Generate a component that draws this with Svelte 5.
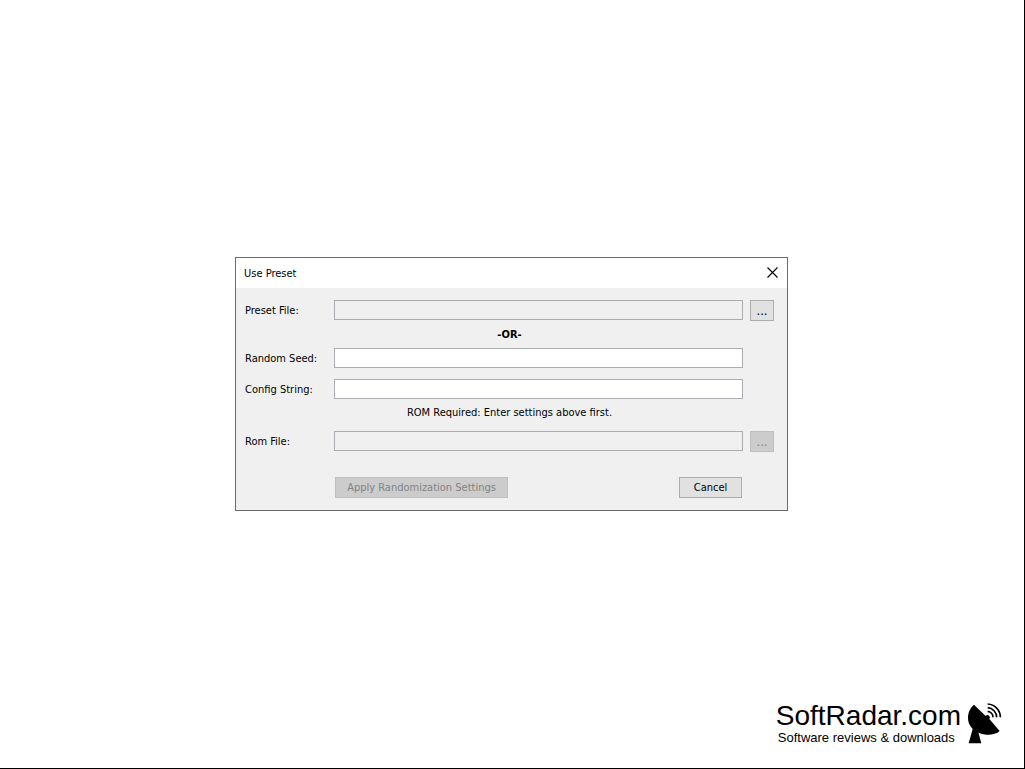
<script>
    let presetFile = $state('');
    let seed = $state('');
    let config = $state('');
    let romFile = $state('');
    let open = $state(true);

    let ready = $derived(romFile !== '');

    function close() {
        open = false;
    }
</script>

<div class="desktop">
    {#if open}
    <div class="dialog" role="dialog" aria-labelledby="title">
        <div class="titlebar">
            <span id="title">Use Preset</span>
            <button class="close" type="button" aria-label="Close" onclick={close}>
                <svg viewBox="0 0 11 11" width="11" height="11">
                    <path d="M.5 .5l10 10M10.5 .5l-10 10" fill="none" stroke="#000" stroke-width="1.1" />
                </svg>
            </button>
        </div>

        <form>
            <div class="row">
                <label for="preset">Preset File:</label>
                <input id="preset" type="text" readonly value={presetFile} />
                <button class="browse" type="button" aria-label="Browse for preset file">...</button>
            </div>
            <p class="or">-OR-</p>
            <div class="row">
                <label for="seed">Random Seed:</label>
                <input id="seed" type="text" bind:value={seed} />
            </div>
            <div class="row config">
                <label for="config">Config String:</label>
                <input id="config" type="text" bind:value={config} />
            </div>
            <p class="hint">ROM Required: Enter settings above first.</p>
            <div class="row">
                <label for="rom">Rom File:</label>
                <input id="rom" type="text" readonly value={romFile} />
                <button class="browse" type="button" aria-label="Browse for ROM file" disabled>...</button>
            </div>
            <div class="actions">
                <button class="apply" type="button" disabled={!ready}>Apply Randomization Settings</button>
                <button class="cancel" type="button" onclick={close}>Cancel</button>
            </div>
        </form>
    </div>
    {/if}

    <footer>
        <div class="brand">
            <div class="name">SoftRadar.com</div>
            <div class="tagline">Software reviews &amp; downloads</div>
        </div>
        <!-- satellite dish -->
        <svg viewBox="24 20 102 123" width="34" height="41" aria-hidden="true">
            <path d="M42 25 L77 59 A6 6 0 0 1 88 68 L119 104 C106 116 80 119 60 111 C38 103 24 86 24 64 C24 48 31 34 42 25Z" />
            <path d="M38 98 L54 104 L64 141 H26Z" />
            <g fill="none" stroke="#000" stroke-width="5">
                <path d="M83 45 A18 18 0 0 1 99 63" />
                <path d="M83 34 A29 29 0 0 1 110 63" />
                <path d="M83 23 A40 40 0 0 1 121 63" />
            </g>
        </svg>
    </footer>
</div>

<style>
    :global(body) {
        background: #fff;
    }
    .desktop {
        box-sizing: border-box;
        min-height: 100vh;
        display: grid;
        grid-template-rows: 1fr auto 1fr;
        justify-items: center;
        padding-right: 1px;
        border-right: 1px solid #000;
        border-bottom: 1px solid #000;
        font-family: Tahoma, "DejaVu Sans Condensed", sans-serif;
        font-size: 11px;
        color: #000;
    }
    .dialog {
        grid-row: 2;
        box-sizing: border-box;
        width: 553px;
        max-width: 100%;
        border: 1px solid #6b6b6b;
        background: #f0f0f0;
    }
    .titlebar {
        display: flex;
        align-items: center;
        justify-content: space-between;
        height: 30px;
        padding: 0 8px;
        background: #fff;
    }
    .close {
        display: flex;
        padding: 1px 1px 3px;
        border: 0;
        background: none;
    }
    form {
        padding: 12px 13px 12px 9px;
    }
    .row {
        display: grid;
        grid-template-columns: 89px 1fr 31px;
        height: 21px;
    }
    label {
        line-height: 22px;
    }
    input {
        box-sizing: border-box;
        width: 100%;
        height: 20px;
        padding: 0 4px;
        border: 1px solid #abadb3;
        background: #fff;
        font: inherit;
        outline: none;
    }
    input:read-only {
        background: #f0f0f0;
    }
    form button {
        box-sizing: border-box;
        height: 21px;
        padding: 0;
        border: 1px solid #adadad;
        background: #e1e1e1;
        color: #000;
        font: inherit;
    }
    form button:disabled {
        border-color: #bfbfbf;
        background: #ccc;
        color: #838383;
    }
    form .browse {
        width: 24px;
        justify-self: end;
        font-size: 13px;
    }
    p {
        margin: 0;
        text-align: center;
    }
    .or {
        height: 27px;
        line-height: 28px;
        font-weight: bold;
    }
    .config {
        margin-top: 10px;
    }
    .hint {
        height: 31px;
        line-height: 26px;
    }
    .actions {
        display: flex;
        justify-content: space-between;
        margin-top: 25px;
        padding: 0 32px 0 90px;
    }
    .apply {
        width: 173px;
    }
    .cancel {
        width: 63px;
    }
    footer {
        grid-row: 3;
        align-self: end;
        justify-self: end;
        display: flex;
        align-items: center;
        gap: 7px;
        padding: 0 21px 23px 0;
        font-family: "Liberation Sans", Arial, sans-serif;
    }
    .name {
        font-size: 28px;
        line-height: 28px;
    }
    .tagline {
        padding-left: 2px;
        font-size: 13px;
        line-height: 15px;
    }
</style>
